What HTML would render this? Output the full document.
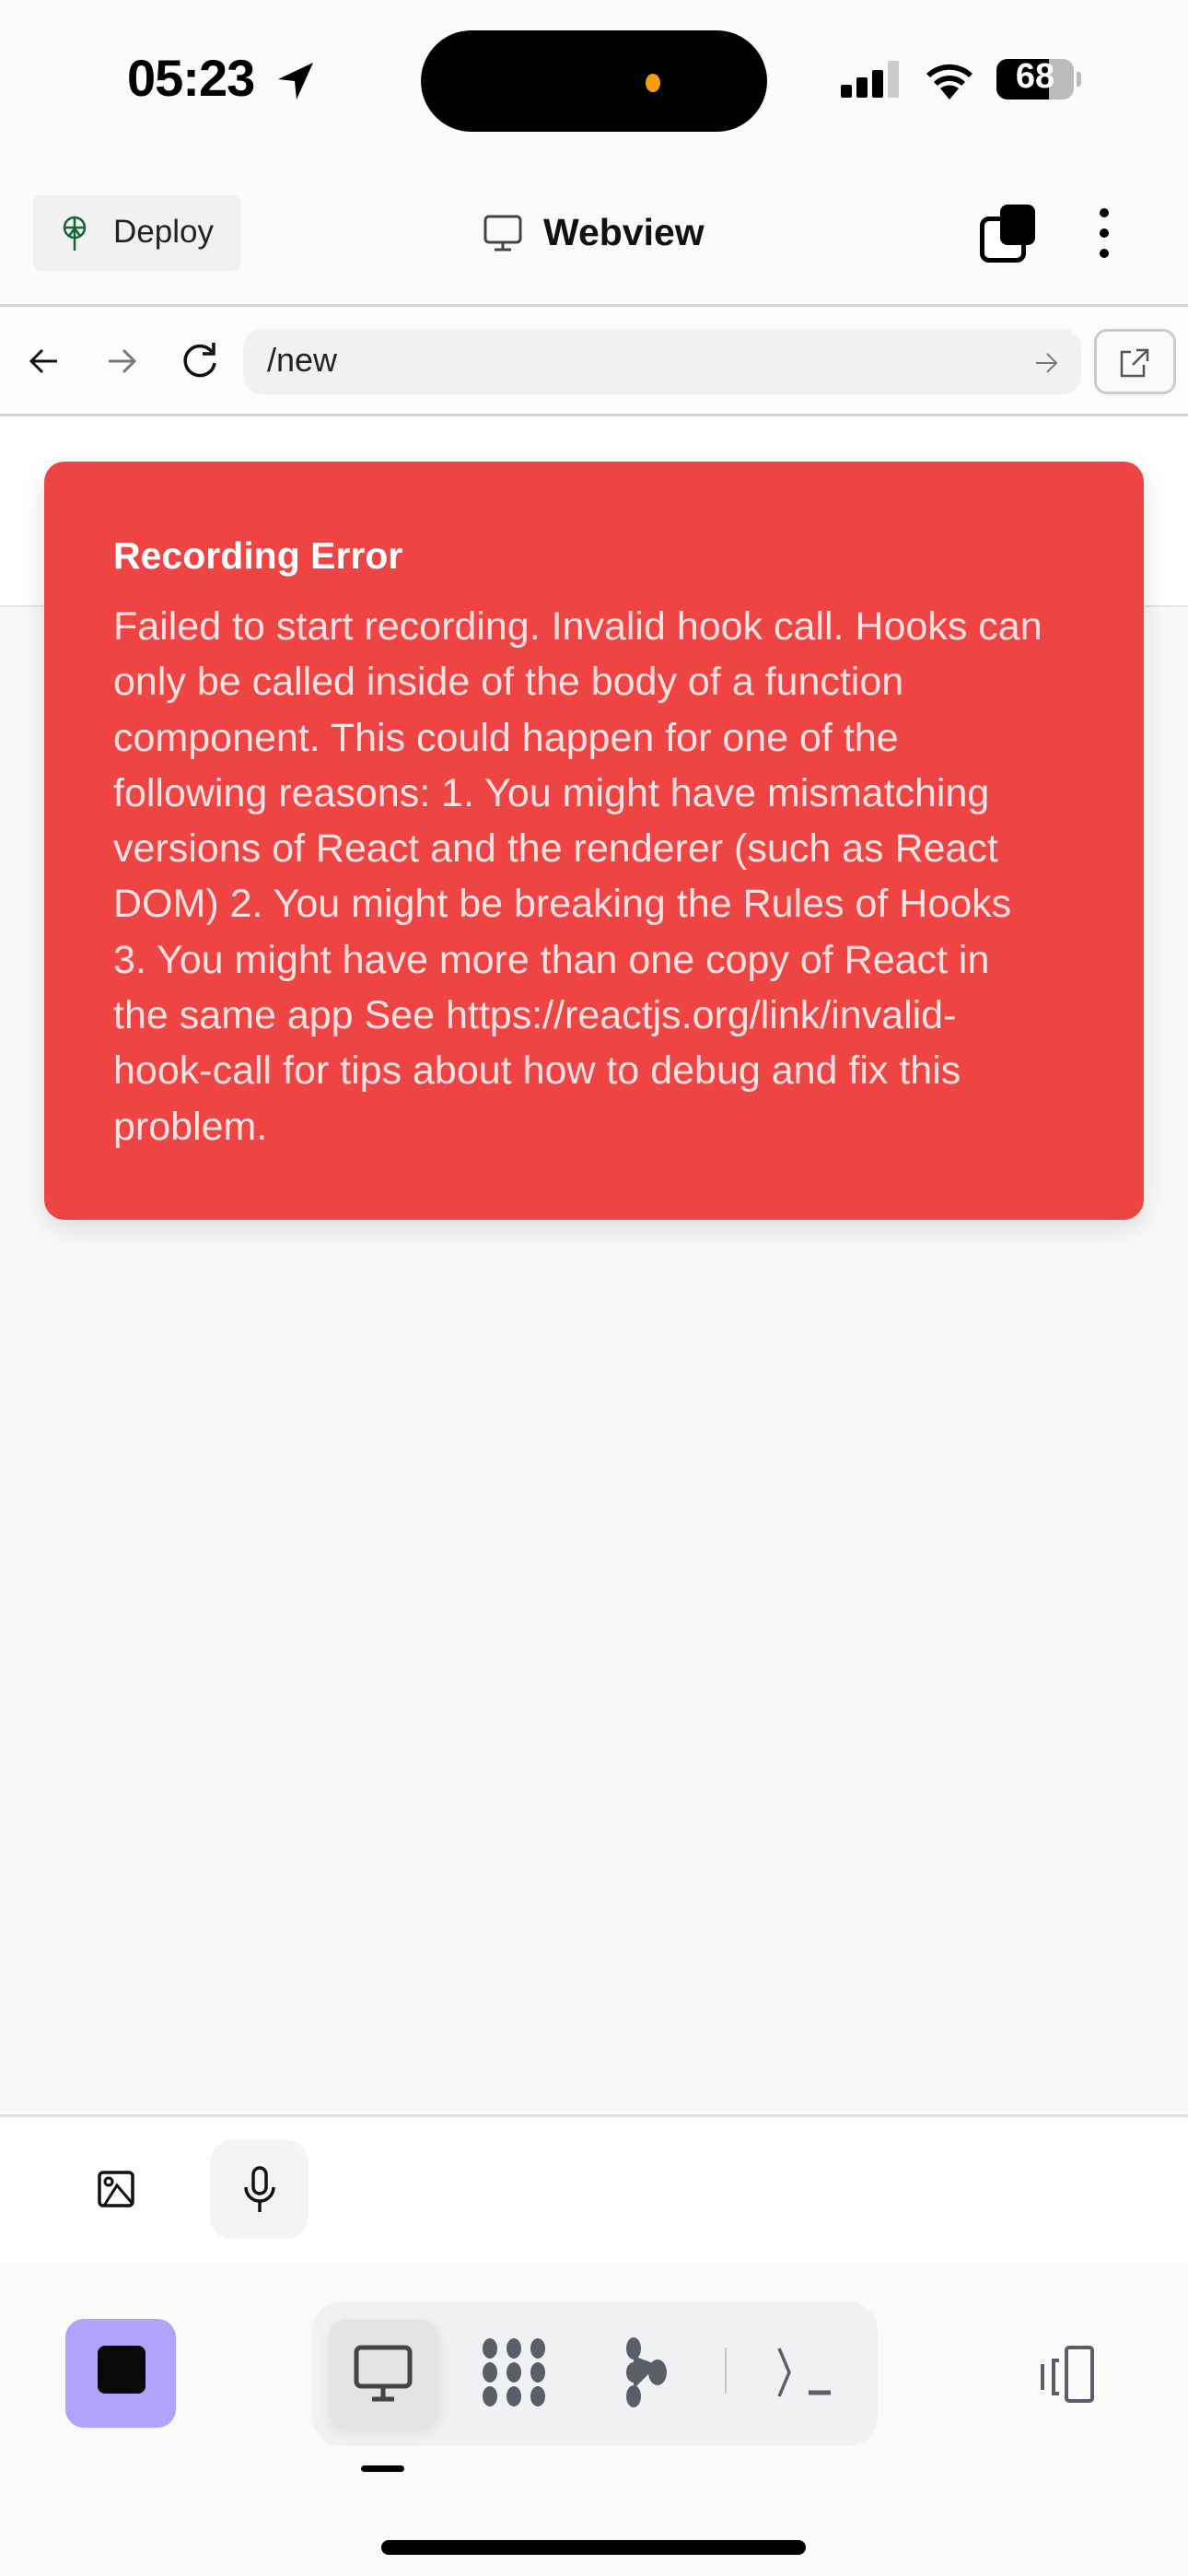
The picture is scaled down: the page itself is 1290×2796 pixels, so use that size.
<!DOCTYPE html>
<html><head><meta charset="utf-8"><style>
*{margin:0;padding:0;box-sizing:border-box}
body{width:1290px;height:2796px;position:relative;background:#f8f9fb;font-family:"Liberation Sans",sans-serif;overflow:hidden}
.a{position:absolute}
</style></head><body>
<div class="a" style="left:0;top:0;width:1290px;height:658px;background:#fcfcfc"></div>
<div class="a" style="left:0;top:0;width:1290px;height:332px;background:#fbfbfb"></div>
<!-- status bar -->
<div class="a" style="left:138px;top:52px;font-size:56px;font-weight:bold;letter-spacing:-1px">05:23</div>
<svg class="a" style="left:300px;top:66px" width="42" height="44" viewBox="0 0 42 44"><path d="M40 2 L2 20 L20 22 L22 42 Z" fill="#000"/></svg>
<div class="a" style="left:457px;top:33px;width:376px;height:110px;background:#000;border-radius:55px"></div>
<div class="a" style="left:701px;top:80px;width:16px;height:20px;background:#f59e0b;border-radius:50%"></div>
<div class="a" style="left:913px;top:92px;width:12px;height:14px;background:#000;border-radius:2px"></div>
<div class="a" style="left:930px;top:84px;width:12px;height:22px;background:#000;border-radius:2px"></div>
<div class="a" style="left:947px;top:76px;width:12px;height:30px;background:#000;border-radius:2px"></div>
<div class="a" style="left:964px;top:66px;width:12px;height:40px;background:#ccc;border-radius:2px"></div>
<svg class="a" style="left:1002px;top:64px" width="58" height="44" viewBox="0 0 58 44"><path d="M29 44 L19 32 A16 16 0 0 1 39 32 Z M12 25 A24 24 0 0 1 46 25 L42 29 A19 19 0 0 0 16 29Z M4 16 A36 36 0 0 1 54 16 L50 20 A31 31 0 0 0 8 20Z" fill="#000"/></svg>
<div class="a" style="left:1082px;top:64px;width:84px;height:44px;background:#bbb;border-radius:12px;overflow:hidden"><div style="width:57px;height:44px;background:#000"></div></div>
<div class="a" style="left:1082px;top:62px;width:84px;font-size:38px;font-weight:bold;color:#fff;text-align:center">68</div>
<div class="a" style="left:1169px;top:78px;width:5px;height:16px;background:#bbb;border-radius:0 3px 3px 0"></div>
<!-- header -->
<div class="a" style="left:36px;top:212px;width:226px;height:82px;background:#f0f1f2;border-radius:8px"></div>
<svg class="a" style="left:64px;top:234px" width="34" height="40" viewBox="0 0 34 40"><g fill="none" stroke="#166534" stroke-width="2.5"><circle cx="17" cy="13" r="11"/><path d="M6 13h22M17 2v36M11 22l6-8 6 8"/></g></svg>
<div class="a" style="left:123px;top:232px;font-size:35px;color:#222">Deploy</div>
<svg class="a" style="left:524px;top:233px" width="44" height="42" viewBox="0 0 44 42"><rect x="3" y="2" width="38" height="28" rx="4" fill="none" stroke="#444" stroke-width="3"/><path d="M22 30v8M13 38h18" stroke="#444" stroke-width="3"/></svg>
<div class="a" style="left:590px;top:229px;font-size:41px;font-weight:bold;color:#111">Webview</div>
<div class="a" style="left:1064px;top:235px;width:50px;height:50px;border:5px solid #000;border-radius:10px;background:#fff"></div>
<div class="a" style="left:1086px;top:222px;width:38px;height:44px;background:#000;border-radius:8px"></div>
<div class="a" style="left:1194px;top:226px;width:10px;height:10px;background:#000;border-radius:50%"></div>
<div class="a" style="left:1194px;top:248px;width:10px;height:10px;background:#000;border-radius:50%"></div>
<div class="a" style="left:1194px;top:270px;width:10px;height:10px;background:#000;border-radius:50%"></div>
<div class="a" style="left:0;top:330px;width:1290px;height:3px;background:#d4d4d4"></div>
<!-- url row -->
<svg class="a" style="left:28px;top:372px" width="40" height="40" viewBox="0 0 40 40"><path d="M34 20H6M18 8L6 20l12 12" fill="none" stroke="#111" stroke-width="3"/></svg>
<svg class="a" style="left:112px;top:372px" width="40" height="40" viewBox="0 0 40 40"><path d="M6 20h28M22 8l12 12-12 12" fill="none" stroke="#777" stroke-width="3"/></svg>
<svg class="a" style="left:194px;top:368px" width="46" height="46" viewBox="0 0 46 46"><path d="M36 14A16 16 0 1 0 39 26" fill="none" stroke="#111" stroke-width="3.5"/><path d="M38 4v12H26" fill="none" stroke="#111" stroke-width="3.5"/></svg>
<div class="a" style="left:264px;top:357px;width:910px;height:71px;background:#f0f1f3;border-radius:20px"></div>
<div class="a" style="left:290px;top:370px;font-size:36px;color:#222">/new</div>
<svg class="a" style="left:1122px;top:380px" width="28" height="28" viewBox="0 0 28 28"><path d="M3 14h22M15 4l10 10-10 10" fill="none" stroke="#777" stroke-width="2"/></svg>
<div class="a" style="left:1188px;top:357px;width:89px;height:71px;border:3px solid #ccc;border-radius:14px;background:#fafafa"></div>
<svg class="a" style="left:1212px;top:376px" width="40" height="36" viewBox="0 0 40 36"><path d="M16 6H6v26h24V20M22 4h12v12M34 4L18 20" fill="none" stroke="#555" stroke-width="2.5"/></svg>
<div class="a" style="left:0;top:449px;width:1290px;height:3px;background:#d4d4d4"></div>
<div class="a" style="left:0;top:452px;width:1290px;height:206px;background:#fff"></div>
<div class="a" style="left:0;top:657px;width:1290px;height:2px;background:#e5e5e5"></div>
<!-- error card -->
<div class="a" style="left:48px;top:501px;width:1194px;height:823px;background:#ef4444;border-radius:22px;box-shadow:0 10px 30px rgba(0,0,0,0.12)"></div>
<div class="a" style="left:123px;top:580px;font-size:41px;font-weight:bold;color:#fff">Recording Error</div>
<div class="a" style="left:123px;top:650px;font-size:43px;line-height:60.3px;color:#fee2e2;white-space:nowrap">Failed to start recording. Invalid hook call. Hooks can<br>only be called inside of the body of a function<br>component. This could happen for one of the<br>following reasons: 1. You might have mismatching<br>versions of React and the renderer (such as React<br>DOM) 2. You might be breaking the Rules of Hooks<br>3. You might have more than one copy of React in<br>the same app See https://reactjs.org/link/invalid-<br>hook-call for tips about how to debug and fix this<br>problem.</div>
<!-- input area -->
<div class="a" style="left:0;top:2295px;width:1290px;height:3px;background:#e2e2e2"></div>
<div class="a" style="left:0;top:2298px;width:1290px;height:157px;background:#fff"></div>
<svg class="a" style="left:105px;top:2355px" width="42" height="42" viewBox="0 0 42 42"><rect x="3" y="3" width="36" height="36" rx="4" fill="none" stroke="#111" stroke-width="3.5"/><circle cx="13" cy="13" r="4" fill="none" stroke="#111" stroke-width="3"/><path d="M8 39l14-22 17 20" fill="none" stroke="#111" stroke-width="3"/></svg>
<div class="a" style="left:228px;top:2323px;width:107px;height:107px;background:#f4f4f3;border-radius:24px"></div>
<svg class="a" style="left:260px;top:2350px" width="44" height="54" viewBox="0 0 44 54"><rect x="15" y="3" width="14" height="28" rx="7" fill="none" stroke="#111" stroke-width="3.5"/><path d="M7 24a15 15 0 0 0 30 0M22 39v12" fill="none" stroke="#111" stroke-width="3.5"/></svg>
<!-- bottom bar -->
<div class="a" style="left:0;top:2455px;width:1290px;height:341px;background:#fafafa"></div>
<div class="a" style="left:71px;top:2517px;width:120px;height:118px;background:#b1a3fc;border-radius:20px"></div>
<div class="a" style="left:106px;top:2546px;width:52px;height:52px;background:#0a0a0a;border-radius:8px"></div>
<div class="a" style="left:339px;top:2498px;width:614px;height:157px;background:#f0f1f3;border-radius:32px"></div>
<div class="a" style="left:357px;top:2517px;width:119px;height:118px;background:#e3e4e6;border-radius:20px;box-shadow:0 6px 14px rgba(0,0,0,0.08)"></div>
<svg class="a" style="left:382px;top:2545px" width="68" height="64" viewBox="0 0 68 64"><rect x="5" y="3" width="58" height="42" rx="5" fill="none" stroke="#444" stroke-width="5"/><path d="M34 45v14M22 59h24" stroke="#444" stroke-width="5"/></svg>
<svg class="a" style="left:520px;top:2537px" width="76" height="76" viewBox="0 0 76 76"><g fill="#5b5e66"><ellipse cx="12" cy="12" rx="8" ry="11"/><ellipse cx="12" cy="38" rx="8" ry="11"/><ellipse cx="12" cy="64" rx="8" ry="11"/><ellipse cx="38" cy="12" rx="8" ry="11"/><ellipse cx="38" cy="38" rx="8" ry="11"/><ellipse cx="38" cy="64" rx="8" ry="11"/><ellipse cx="64" cy="12" rx="8" ry="11"/><ellipse cx="64" cy="38" rx="8" ry="11"/><ellipse cx="64" cy="64" rx="8" ry="11"/></g></svg>
<svg class="a" style="left:676px;top:2537px" width="52" height="76" viewBox="0 0 52 76"><g fill="#5b5e66"><ellipse cx="12" cy="12" rx="8" ry="12"/><ellipse cx="12" cy="64" rx="8" ry="12"/><ellipse cx="12" cy="38" rx="8" ry="11"/><ellipse cx="38" cy="38" rx="10" ry="14"/><path d="M12 20 L38 30 L12 56Z"/></g></svg>
<div class="a" style="left:787px;top:2548px;width:2px;height:50px;background:#c6c6c8"></div>
<svg class="a" style="left:840px;top:2545px" width="66" height="58" viewBox="0 0 66 58"><path d="M6 4l11 26-11 26" fill="none" stroke="#5b5e66" stroke-width="3.5"/><path d="M38 52h24" stroke="#5b5e66" stroke-width="5"/></svg>
<svg class="a" style="left:1120px;top:2544px" width="74" height="66" viewBox="0 0 74 66"><rect x="38" y="4" width="28" height="58" rx="3" fill="none" stroke="#5b5e66" stroke-width="4"/><path d="M30 18h-6v36h6" fill="none" stroke="#5b5e66" stroke-width="4"/><path d="M12 22v28" stroke="#5b5e66" stroke-width="4"/></svg>
<div class="a" style="left:392px;top:2676px;width:47px;height:7px;background:#000;border-radius:4px"></div>
<div class="a" style="left:414px;top:2757px;width:461px;height:16px;background:#000;border-radius:8px"></div>
</body></html>
